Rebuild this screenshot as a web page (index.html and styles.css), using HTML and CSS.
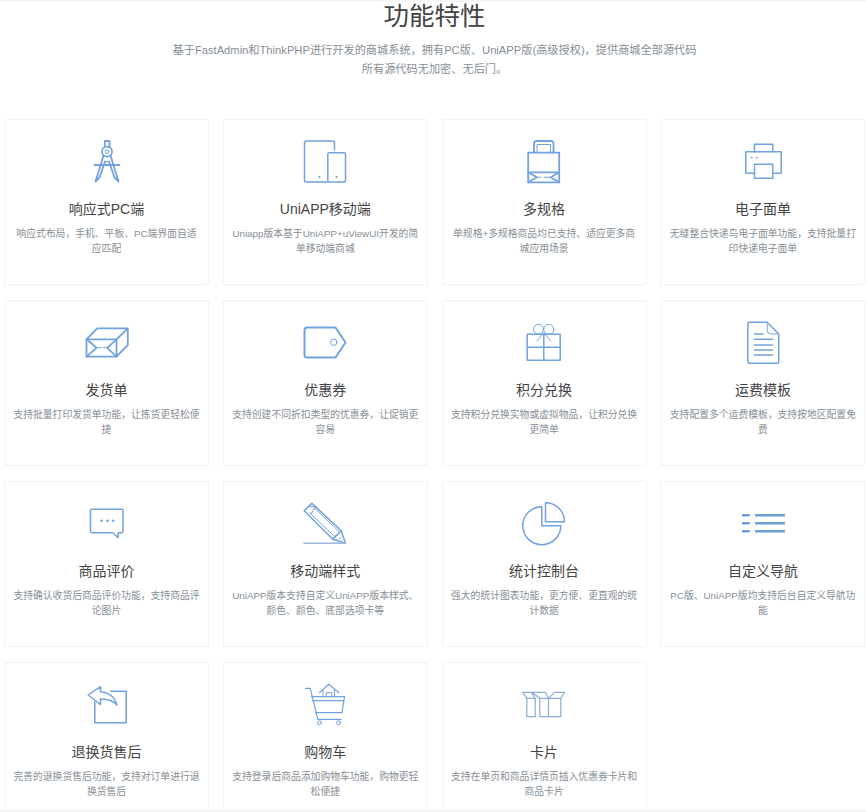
FILE: index.html
```html
<!DOCTYPE html>
<html lang="zh-CN">
<head>
<meta charset="utf-8">
<title>功能特性</title>
<link rel="stylesheet" href="styles.css">
</head>
<body>
<div class="page">
  <header class="head">
    <h1>功能特性</h1>
    <p>基于FastAdmin和ThinkPHP进行开发的商城系统，拥有PC版、UniAPP版(高级授权)，提供商城全部源代码<br>所有源代码无加密、无后门。</p>
  </header>
  <main class="grid">
    <article class="card">
      <svg class="ic strong" viewBox="0 0 44 44"><path d="M19.800 6V1h4.700v5"/><circle cx="22" cy="11.700" r="5"/><circle class="thin" cx="22" cy="11.700" r="1.800"/><path d="M9.500 25h25"/><path d="M18.500 15.500 10.500 41.500l4-4 5.500-16M25.500 15.500l8 26-4-4-5.500-16"/><path class="thin" d="M20 21.500h4"/></svg>
      <h2>响应式PC端</h2>
      <p>响应式布局，手机、平板、PC端界面自适应匹配</p>
    </article>
    <article class="card">
      <svg class="ic" viewBox="0 0 44 44"><path d="M31.500 10V2.500a1.500 1.500 0 0 0-1.500-1.500H3a1.500 1.500 0 0 0-1.500 1.500v38A1.500 1.500 0 0 0 3 42h21"/><rect x="24.800" y="12.700" width="17.700" height="29.300" rx="1.500"/><circle class="dot" cx="16.500" cy="37" r="1.100"/><circle class="dot" cx="33.500" cy="37" r="1.100"/></svg>
      <h2>UniAPP移动端</h2>
      <p>Uniapp版本基于UniAPP+uViewUI开发的简单移动端商城</p>
    </article>
    <article class="card">
      <svg class="ic strong" viewBox="0 0 44 44"><rect x="6.200" y="12.700" width="31" height="29.600"/><path d="M12 12.700V3.500a2.500 2.500 0 0 1 2.500-2.500h14.500a2.500 2.500 0 0 1 2.500 2.500v9.200"/><path class="thin" d="M15 12.700V4.500h13.500v8.200"/><path d="M6.200 32.300h31M6.200 32.300l8.500 5-8.500 5M37.200 32.300l-8.500 5 8.500 5"/><path class="thin" d="M15 37.300h4M22 37.300h6"/></svg>
      <h2>多规格</h2>
      <p>单规格+多规格商品均已支持、适应更多商城应用场景</p>
    </article>
    <article class="card">
      <svg class="ic" viewBox="0 0 44 44"><path d="M13.500 33.300H4.800V11.700h35.400v21.600h-8.500"/><path d="M13.500 11.700V4.300h18.300v7.400"/><rect x="13.500" y="24.300" width="18.300" height="14"/><circle class="dot" cx="10.800" cy="17.700" r="0.900"/><circle class="dot" cx="15.800" cy="17.700" r="0.900"/></svg>
      <h2>电子面单</h2>
      <p>无缝整合快递鸟电子面单功能，支持批量打印快递电子面单</p>
    </article>

    <article class="card">
      <svg class="ic strong" viewBox="0 0 44 44"><path d="M1.500 18.300h30v17.400h-30zM1.500 18.300l10.700-11h30.600l-11.300 11M42.800 7.300V24l-11.300 11.700"/><path d="M1.500 18.300l10 8.500-10 8.900M31.500 18.300l-9.300 8.500 9.300 8.900"/><path class="thin" d="M12.800 26.700h3.400M18.200 26.700h3.300"/></svg>
      <h2>发货单</h2>
      <p>支持批量打印发货单功能，让拣货更轻松便捷</p>
    </article>
    <article class="card">
      <svg class="ic thick" viewBox="0 0 44 44"><path d="M32.500 6.500H4a2.500 2.500 0 0 0-2.500 2.500v25A2.500 2.500 0 0 0 4 36.500h28.500l10-15z"/><circle class="thin" cx="30.800" cy="21.300" r="3.200"/></svg>
      <h2>优惠券</h2>
      <p>支持创建不同折扣类型的优惠券，让促销更容易</p>
    </article>
    <article class="card">
      <svg class="ic" viewBox="0 0 44 44"><rect x="5.200" y="13.300" width="33" height="26"/><path d="M21.800 13.300v26M5.200 26.300h33"/><circle class="thin" cx="16.500" cy="8.300" r="5"/><circle class="thin" cx="26.800" cy="8.300" r="5"/><path class="thin" d="M21.800 12l-7 8M21.800 12l7 8"/></svg>
      <h2>积分兑换</h2>
      <p>支持积分兑换实物或虚拟物品，让积分兑换更简单</p>
    </article>
    <article class="card">
      <svg class="ic" viewBox="0 0 44 44"><path d="M26.200 1.300H8.300a1.500 1.500 0 0 0-1.500 1.500v38a1.500 1.500 0 0 0 1.500 1.500h28a1.500 1.500 0 0 0 1.500-1.500V13z"/><path class="thin" d="M26.200 1.300v8a3.700 3.700 0 0 0 3.700 3.700h7.900"/><path d="M13.500 13h8.700M13.500 18.300h18M13.500 24h18M13.500 29h18M13.500 34h18"/></svg>
      <h2>运费模板</h2>
      <p>支持配置多个运费模板，支持按地区配置免费</p>
    </article>

    <article class="card">
      <svg class="ic" viewBox="0 0 44 44"><path d="M7 7.300h29.500A1.500 1.500 0 0 1 38 8.800v20.400a1.500 1.500 0 0 1-1.500 1.500h-3.300l0 5-5.500-5H7a1.500 1.500 0 0 1-1.500-1.500V8.800A1.500 1.500 0 0 1 7 7.300z"/><circle class="dot" cx="16.500" cy="18.700" r="1.300"/><circle class="dot" cx="22.500" cy="18.700" r="1.300"/><circle class="dot" cx="28.200" cy="18.700" r="1.300"/></svg>
      <h2>商品评价</h2>
      <p>支持确认收货后商品评价功能，支持商品评论图片</p>
    </article>
    <article class="card">
      <svg class="ic" viewBox="0 0 44 44"><path d="M1.200 8.700 8.800 1.200l29.400 27.500-8.400 8.600z"/><path d="M38.200 28.700l4.300 12.600-12.700-4"/><path class="thin" d="M5 4.800l8-0.500-5 7.500M11 5.500l25.500 24.500M6.500 10.500l25.500 24.500M33 33l-2.500 3M36 37l2-2"/><path class="under" d="M1 41.300h41.500"/></svg>
      <h2>移动端样式</h2>
      <p>UniAPP版本支持自定义UniAPP版本样式、颜色、颜色、底部选项卡等</p>
    </article>
    <article class="card">
      <svg class="ic" viewBox="0 0 44 44"><path d="M19.800 4.700A19 19 0 1 0 38.800 23.700H19.800z"/><path d="M23.500 0.800A19 19 0 0 1 42.500 19.700H23.500z"/></svg>
      <h2>统计控制台</h2>
      <p>强大的统计图表功能，更方便、更直观的统计数据</p>
    </article>
    <article class="card">
      <svg class="ic bars" viewBox="0 0 44 44"><path d="M2 13.300h5.800M2 21.300h5.800M2 29.300h5.800M15 13.300h28.500M15 21.300h28.500M15 29.300h28.500"/></svg>
      <h2>自定义导航</h2>
      <p>PC版、UniAPP版均支持后台自定义导航功能</p>
    </article>

    <article class="card">
      <svg class="ic" viewBox="0 0 44 44"><path d="M25.500 8.300H41.200V39.700H9.800V19"/><path d="M3.200 12 15.500 3.700v5.200c8 .3 14 4.500 16.500 13.100-4-4.500-9.500-6-16.500-6v5.500z"/></svg>
      <h2>退换货售后</h2>
      <p>完善的退换货售后功能，支持对订单进行退换货售后</p>
    </article>
    <article class="card">
      <svg class="ic thincart" viewBox="0 0 44 44"><path d="M2.500 5.300H7.200L14.800 36.300H38"/><path d="M8.500 13.700H41.500L39 29.700H12.500M9.500 17.700h31"/><circle class="thin" cx="16.500" cy="39.700" r="1.900"/><circle class="thin" cx="35.500" cy="39.700" r="1.900"/><path d="M16.500 9.700 25.800 1.300 35.800 9.700"/><path class="thin" d="M20 7v6.700M31.500 7v6.700M23.200 13.700v-4h5.500v4"/></svg>
      <h2>购物车</h2>
      <p>支持登录后商品添加购物车功能，购物更轻松便捷</p>
    </article>
    <article class="card">
      <svg class="ic thinbox" viewBox="0 0 44 44"><path d="M4.800 15.300h8.400v18.400H4.800zM17.800 15.300h8.700v18.400h-8.700zM26.500 15.300h12.300v18.400H26.500z"/><path d="M0.800 9.300l4 6M0.800 9.300H9.200l4 6M9.800 9.300l8 6M9.800 9.300H23.200l3.300 6M26.500 15.300l6-6H42.500l-3.700 6"/></svg>
      <h2>卡片</h2>
      <p>支持在单页和商品详情页插入优惠券卡片和商品卡片</p>
    </article>
  </main>
  <div class="edge-bottom"></div>
</div>
</body>
</html>
```
FILE: styles.css
```css
* {
  box-sizing: border-box;
}
html, body {
  margin: 0;
  padding: 0;
  background: #fff;
}
body {
  font-family: "Liberation Sans", "Noto Sans CJK SC", sans-serif;
  color: #333;
}
.page {
  width: 866px;
  height: 812px;
  overflow: hidden;
  position: relative;
  border-top: 2px solid #f6f6f6;
}
.head {
  height: 117px;
  padding-left: 3px;
  text-align: center;
}
.head h1 {
  margin: 0;
  font-size: 25.500px;
  font-weight: 400;
  line-height: 28px;
  color: #444;
}
.head p {
  margin: 11px 0 0;
  font-size: 11.200px;
  line-height: 19px;
  color: #868e96;
}
.grid {
  display: grid;
  grid-template-columns: repeat(4, 205px);
  grid-auto-rows: 166px;
  column-gap: 13.800px;
  row-gap: 15px;
  padding-left: 4px;
}
.card {
  border: 1px solid #f3f3f3;
  border-radius: 2px;
  padding: 20px 8px 0;
  text-align: center;
  background: #fff;
}
.ic {
  display: block;
  width: 44px;
  height: 44px;
  margin: 0 auto;
  fill: none;
  stroke: #73a2e0;
  stroke-width: 1.500;
  stroke-linejoin: round;
  stroke-linecap: round;
}
.ic .thin {
  stroke-width: 1;
}
.ic .dot {
  fill: #73a2e0;
  stroke: none;
}
.ic .under {
  stroke: #9db8de;
  stroke-width: 1.500;
}
.ic.strong {
  stroke-width: 1.800;
}
.ic.thick {
  stroke-width: 2;
}
.ic.bars {
  stroke: #6f9bd6;
  stroke-width: 2.500;
}
.ic.thinbox {
  stroke: #8badda;
  stroke-width: 1.200;
}
.ic.thincart {
  stroke-width: 1.200;
}
.card h2 {
  margin: 15px 0 0;
  font-size: 14px;
  font-weight: 400;
  line-height: 20px;
  color: #444;
}
.card p {
  margin: 7px 0 0;
  font-size: 9.800px;
  line-height: 15px;
  color: #868e96;
}
.edge-bottom {
  position: absolute;
  left: 0;
  right: 0;
  bottom: 0;
  height: 3px;
  background: #f6f6f6;
}
```
